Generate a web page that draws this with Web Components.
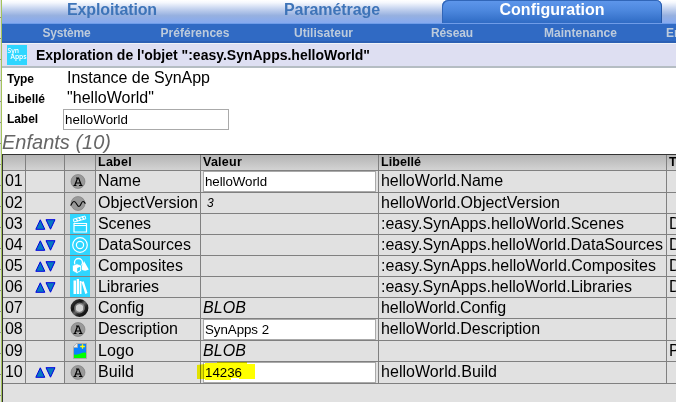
<!DOCTYPE html>
<html lang="fr"><head><meta charset="utf-8"><title>Configuration</title>
<style>html,body{margin:0;height:100%;overflow:hidden;background:#fff}</style></head><body>
<object-explorer></object-explorer>
<script>
const define=(n,html,init)=>customElements.define(n,class extends HTMLElement{
  constructor(){super();this.attachShadow({mode:'open'}).innerHTML=html;}
  connectedCallback(){if(init)init(this,this.shadowRoot);}
});

// Single-line text; "w" is the advance width it should occupy, "s" the font size.
define('ui-text','<style>:host{display:inline-block;white-space:pre;vertical-align:top}span{display:inline-block}</style><span><slot></slot></span>',(h,r)=>{
  const s=h.getAttribute('s'),w=+h.getAttribute('w');
  if(s)h.style.fontSize=s+'px';
  if(w){const n=h.textContent.length,e=r.querySelector('span');
    e.style.letterSpacing=((w-e.getBoundingClientRect().width)/n)+'px';}
});

const disc='<circle cx="8" cy="10.5" r="7" fill="#999" stroke="#777" stroke-width=".6"/>';
const cy='<rect width="20" height="20" fill="#2fd6ff"/>';
const icons={
 a:disc+'<path d="M3.500 14.500h3M9 14.500h3.500M4.800 14.200L7.600 7h1l2.700 7.200M5.800 12h4.800M6 7h2.500" fill="none" stroke="#000" stroke-width="1.2"/>',
 wave:disc+'<path d="M.5 12.500C1.500 12 2 8.500 4 8.500C6.500 8.500 7 13.500 9 13.500C11 13.500 11 8.500 13 8.500C14.500 8.500 14.500 10 15.500 10.500" fill="none" stroke="#000" stroke-width="1.1"/>',
 scene:cy+'<g fill="none" stroke="#fff"><path d="M4 9.500h12.500v8.500H4zM4 11.500h12.500" stroke-width="1.2"/><path d="M3.300 5.200L15 2l.8 2.800L4 8z" stroke-width="1"/><path d="M6 5l2 2M9 4l2 2M12 3l2 2" stroke-width="1.300"/></g>',
 data:cy+'<g fill="none" stroke="#fff" stroke-width="1.200"><circle cx="10" cy="10" r="7.300"/><circle cx="10" cy="10" r="3.600"/></g>',
 comp:cy+'<circle cx="8.500" cy="6.500" r="4" fill="none" stroke="#fff" stroke-width="1.300"/><path d="M14 5l4.800 8.500q-4 2.500-8-.5z" fill="#fff"/><path d="M2.500 9.500L7 7.800l4.500 1.700v5.500L7 17.500 2.500 15z" fill="#fff" stroke="#2fd6ff" stroke-width=".7"/><path d="M7.200 12l3-1.300v3.600L7.200 16z" fill="#2fd6ff"/>',
 lib:cy+'<path d="M3.500 3.500H6V17H3.500zM6.700 2H9v15H6.700zM9.700 4h1.800v13H9.700zM11.500 5l2.200-.8L17.500 16l-2.200 1z" fill="#fff"/>',
 ring:'<defs><linearGradient id="g" x2="1" y2="1"><stop stop-color="#333"/><stop offset=".3" stop-color="#111"/><stop offset=".5" stop-color="#666"/><stop offset=".7" stop-color="#222"/><stop offset="1" stop-color="#111"/></linearGradient></defs><circle cx="9.500" cy="10" r="6.400" fill="none" stroke="url(#g)" stroke-width="5"/><circle cx="9.500" cy="10" r="4.600" fill="none" stroke="#999" stroke-width="1.600" opacity=".7"/>',
 img:'<path d="M6.500 2.500h10v15h-13V6z" fill="#0a82ff" stroke="#aaa"/><path d="M4 13.500q4 .5 6.500-1 3-1.500 5.500-.8V17H4z" fill="#0f0"/><path d="M3.500 6.500V5.500l3-3h1v4z" fill="#e8e8e8" stroke="#aaa" stroke-width=".7"/><path d="M12.500 3.200v4.600M10.200 5.500h4.600" stroke="#ff0" stroke-width="1.300"/>'
};
define('ui-icon','<style>:host{display:block;width:20px;height:20px}svg{display:block}</style>',(h,r)=>{
  r.innerHTML+='<svg width="20" height="20" viewBox="0 0 20 20">'+icons[h.getAttribute('name')]+'</svg>';
});
define('sort-arrows','<style>:host{display:block;width:21px;height:11px}svg{display:block}</style><svg width="21" height="11"><path d="M.8 10.300h9L5.300.8zM11 .7h9L15.500 10.200z" fill="#0878c0" stroke="#0000e0"/></svg>');
define('text-field','<style>:host{display:block;box-sizing:border-box;border:1px solid #aaa;background:#fff;padding-left:1px;font-size:13.33px;line-height:19px;height:21px;position:relative}</style><slot></slot>');

define('tab-strip',`<style>
:host{display:grid;grid-template-columns:220px 220px 220px 14px;height:23px;background:linear-gradient(#fff 0,#f4f7fd 12%,#c2d1ee 40%,#96b0e0 68%,#86aaf0);font-weight:bold;line-height:19px;text-align:center;color:#3e74b8}
.on{background:linear-gradient(#5f97ec,#4d88de 45%,#2f6bc4);border-radius:6px 6px 0 0;color:#fff;box-shadow:inset 1px 1px #3166b8,inset -1px 0 #2558a8}
div{height:23px}</style>
<div><ui-text s="16" w="90">Exploitation</ui-text></div><div><ui-text s="16" w="96">Paramétrage</ui-text></div><div class="on"><ui-text s="16" w="105">Configuration</ui-text></div><i></i>`);
define('sub-nav',`<style>
:host{display:grid;grid-template-columns:129px 128px 129px 128px 129px 129px;height:20px;box-sizing:border-box;background:#306ac4;border-top:1px solid #6f9ce8;border-bottom:2px solid #2c60b4;font-weight:bold;line-height:18px;text-align:center;color:#bdcbdc;white-space:nowrap}
.l{text-align:left;padding-left:21px}</style>
<div><ui-text s="12" w="48">Système</ui-text></div><div><ui-text s="12" w="69">Préférences</ui-text></div><div><ui-text s="12" w="59">Utilisateur</ui-text></div><div><ui-text s="12" w="42">Réseau</ui-text></div><div><ui-text s="12" w="73">Maintenance</ui-text></div><div class="l"><ui-text s="12">Energie</ui-text></div>`);
define('page-title',`<style>
:host{display:flex;align-items:center;height:25px;box-sizing:border-box;background:#dedff2;border-top:1px solid #f0f3f8;border-bottom:2px solid #b5bdc3;padding-left:5px;gap:9px;font-weight:bold;line-height:23px}
svg{display:block}</style>
<svg width="20" height="20"><rect width="20" height="20" fill="#2fd6ff"/><g fill="#fff" font-family="Open Sans" font-weight="600" font-size="7.500"><text x=".5" y="7.500" textLength="11.500" lengthAdjust="spacingAndGlyphs">Syn</text><text x="3.500" y="14" textLength="16" lengthAdjust="spacingAndGlyphs">Apps</text></g></svg>
<ui-text s="14" w="334">Exploration de l'objet ":easy.SynApps.helloWorld"</ui-text>`);
define('object-summary',`<style>
:host{display:block;height:86px}
.g{display:grid;grid-template-columns:56px 166px;grid-template-rows:20px 20px 21px;padding:1px 0 0 5px;line-height:19px}
b{line-height:20px}.v{padding-left:4px;line-height:18px}
.h{font-style:italic;color:#666;line-height:24px}
</style><div class="g"><b><ui-text s="12" w="27">Type</ui-text></b><div class="v"><ui-text s="16" w="143">Instance de SynApp</ui-text></div><b><ui-text s="12" w="38">Libellé</ui-text></b><div class="v"><ui-text s="16" w="87">"helloWorld"</ui-text></div><b><ui-text s="12" w="31">Label</ui-text></b><text-field><ui-text s="13.33" w="63">helloWorld</ui-text></text-field></div><div class="h"><ui-text s="20" w="109">Enfants (10)</ui-text></div>`);

const rows=[
 ['01','a','Name',43,'f:helloWorld:62','helloWorld.Name',122,'',22],
 ['02','wave','ObjectVersion',100,'3','helloWorld.ObjectVersion',179,'',21],
 ['03','scene','Scenes',53,'',':easy.SynApps.helloWorld.Scenes',243,'D',21,1],
 ['04','data','DataSources',93,'',':easy.SynApps.helloWorld.DataSources',282,'D',21,1],
 ['05','comp','Composites',85,'',':easy.SynApps.helloWorld.Composites',275,'D',21,1],
 ['06','lib','Libraries',61,'',':easy.SynApps.helloWorld.Libraries',251,'D',21,1],
 ['07','ring','Config',46,'BLOB','helloWorld.Config',125,'',21],
 ['08','a','Description',80,'f:SynApps 2:64','helloWorld.Description',159,'',22],
 ['09','img','Logo',36,'BLOB','',0,'P',21],
 ['10','a','Build',36,'f:14236:37','helloWorld.Build',116,'',22,1]];
const val=v=>v[1]===':'?(([,t,w])=>`<text-field class="${t==='14236'?'hl':''}"><ui-text s="13.33" w="${w}">${t}</ui-text></text-field>`)(v.split(':'))
  :v==='BLOB'?'<i><ui-text s="16" w="43">BLOB</ui-text></i>':v?`<i class="n"><ui-text s="12">${v}</ui-text></i>`:'';
define('child-table',`<style>
:host{display:block;height:248px;box-sizing:border-box;background:#e1e1e1;border-left:1px solid #333;border-top:1px solid #333;font-size:16px}
.r{display:grid;grid-template-columns:23px 39px 31px 105px 178px 288px 9px;box-sizing:border-box}
.r>div{box-sizing:border-box;border-right:1px solid #808080;border-bottom:1px solid #808080;padding-left:2px;line-height:19px;min-width:0;white-space:nowrap}
.r>div:last-child{border-right:0;overflow:hidden}
.head{height:16px;background:linear-gradient(#b4b4b4,#d5d5d5);font-weight:bold}
.head>div{line-height:15px}
.r>.no{padding-left:2px}
.r>.ic{padding:0 0 0 5px;background:#d1d1d1}
.r>.ar{padding:5px 0 0 9px}
text-field{width:173px;height:21px}
.n{padding-left:4px;line-height:20px}
.hl svg{position:absolute;left:-8px;top:-2px;mix-blend-mode:multiply}
</style><div class="r head"><div></div><div></div><div></div><div><ui-text s="12.5" w="34">Label</ui-text></div><div><ui-text s="12.5" w="39">Valeur</ui-text></div><div><ui-text s="12.5" w="40">Libellé</ui-text></div><div><ui-text s="12.5">Type</ui-text></div></div>`+
rows.map(r=>`<div class="r" style="height:${r[8]}px"><div class="no"><ui-text s="16" w="17.500">${r[0]}</ui-text></div><div class="ar">${r[9]?'<sort-arrows></sort-arrows>':''}</div><div class="ic"><ui-icon name="${r[1]}"></ui-icon></div><div><ui-text s="16" w="${r[3]}">${r[2]}</ui-text></div><div>${val(r[4])}</div><div>${r[5]?`<ui-text s="16" w="${r[6]}">${r[5]}</ui-text>`:''}</div><div>${r[7]}</div></div>`).join(''),(h,r)=>{
 const f=r.querySelector('.hl');
 f.insertAdjacentHTML('beforeend','<svg width="62" height="22"><path d="M1 4l8-1V2h12V1h30v2h8v15H43v-1h-8v2H9v-1H1z" fill="#ff0"/></svg>');
});
define('object-explorer',`<style>
:host{display:grid;grid-template-columns:1px 1px 674px;width:676px;height:402px;font-family:"Liberation Sans",Arial,sans-serif;color:#000;overflow:hidden}
.edge{background:repeating-linear-gradient(#ddd 0 17px,#888 17px 18px,#ddd 18px 21px)}.line{background:#a3c45c}
main{min-width:0;overflow:hidden}
</style><div class="edge"></div><div class="line"></div><main><tab-strip></tab-strip><sub-nav></sub-nav><page-title></page-title><object-summary></object-summary><child-table></child-table></main>`);
</script></body></html>
